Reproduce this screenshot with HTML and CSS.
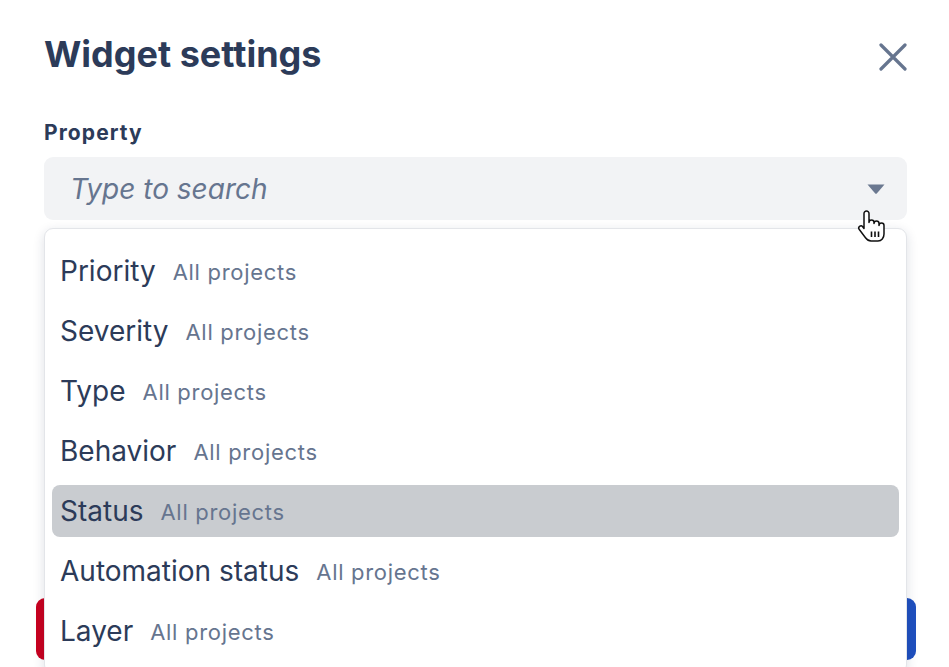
FILE: index.html
```html
<!DOCTYPE html>
<html lang="en">
<head>
<meta charset="utf-8">
<title>Widget settings</title>
<link rel="stylesheet" href="styles.css">
</head>
<body>
<div class="dialog">
  <header class="dialog-header">
    <h2 class="dialog-title">Widget settings</h2>
    <button class="close-btn" aria-label="Close">
      <svg width="28" height="28" viewBox="0 0 28 28"><path d="M2 2 L26 26 M26 2 L2 26" stroke="#66758f" stroke-width="3.2" stroke-linecap="round" fill="none"/></svg>
    </button>
  </header>

  <div class="field">
    <label class="field-label">Property</label>
    <div class="select">
      <span class="placeholder">Type to search</span>
      <svg class="caret" width="18" height="10" viewBox="0 0 18 10"><path d="M0.5 0.5 H17.5 L10 9.2 Q9 10.2 8 9.2 Z" fill="#6b7890"/></svg>
      <svg class="cursor" width="30" height="32" viewBox="0 0 30 32"><path d="M9.5 1 a2.5 2.5 0 0 1 2.5 2.5 V12.5 a2.5 2.5 0 0 1 5 0 V13.5 a2.5 2.5 0 0 1 5 0 V15.5 a2.5 2.5 0 0 1 5 0 V24 c0 4-2.5 7-6 7 H14 c-2.5 0-4-1.2-5.5-3.2 L2.3 19.5 a2.2 2.2 0 0 1 3.4-2.8 L7 18.5 V3.5 a2.5 2.5 0 0 1 2.5-2.5 z" fill="#fff" stroke="#111" stroke-width="1.5" stroke-linejoin="round"/><path d="M14.5 21.5v5.5 M18 21.5v5.5 M21.5 21.5v5.5" stroke="#111" stroke-width="1.6"/></svg>
    </div>
    <ul class="menu">
      <li class="option"><span class="opt-name">Priority</span><span class="opt-scope">All projects</span></li>
      <li class="option"><span class="opt-name">Severity</span><span class="opt-scope">All projects</span></li>
      <li class="option"><span class="opt-name">Type</span><span class="opt-scope">All projects</span></li>
      <li class="option"><span class="opt-name">Behavior</span><span class="opt-scope">All projects</span></li>
      <li class="option active"><span class="opt-name">Status</span><span class="opt-scope">All projects</span></li>
      <li class="option"><span class="opt-name">Automation status</span><span class="opt-scope">All projects</span></li>
      <li class="option"><span class="opt-name">Layer</span><span class="opt-scope">All projects</span></li>
    </ul>
  </div>

  <footer class="dialog-footer">
    <button class="btn btn-danger" aria-label="Delete"></button>
    <button class="btn btn-primary" aria-label="Save"></button>
  </footer>
</div>
</body>
</html>
```

FILE: styles.css
```css
html, body {
  margin: 0;
  padding: 0;
  height: 667px;
  overflow: hidden;
  background: #ffffff;
}
body {
  font-family: "Inter", "Noto Sans", sans-serif;
  color: #2c3b59;
}
.dialog {
  padding: 32px 42px 0 44px;
}
.dialog-header {
  display: flex;
  justify-content: space-between;
  align-items: center;
  height: 44px;
}
.dialog-title {
  margin: 0;
  font-size: 36px;
  line-height: 44px;
  font-weight: 700;
  color: #2c3b59;
}
.close-btn {
  border: 0;
  background: none;
  padding: 0;
  width: 28px;
  height: 28px;
  margin-top: 6px;
  display: flex;
}
.field {
  position: relative;
  margin-top: 44px;
}
.field-label {
  display: block;
  font-size: 21px;
  line-height: 25px;
  font-weight: 700;
  letter-spacing: 1.1px;
  color: #2c3b59;
}
.select {
  position: relative;
  margin-top: 12px;
  height: 63px;
  background: #f2f3f5;
  border-radius: 9px;
  display: flex;
  align-items: center;
  padding: 0 22px 0 26px;
}
.placeholder {
  flex: 1;
  font-size: 28px;
  font-style: italic;
  color: #66758f;
}
.caret {
  display: block;
}
.cursor {
  position: absolute;
  right: 20px;
  top: 53px;
  z-index: 5;
}
.menu {
  position: absolute;
  left: 0;
  right: 0;
  top: calc(100% + 8px);
  margin: 0;
  padding: 16px 7px 16px 7px;
  list-style: none;
  background: #ffffff;
  border: 1px solid #e3e5e9;
  border-radius: 9px;
  box-shadow: 0 3px 12px rgba(20, 35, 70, 0.14);
  display: flex;
  flex-direction: column;
  gap: 8px;
  z-index: 3;
}
.option {
  height: 52px;
  display: flex;
  align-items: center;
  gap: 17px;
  padding: 0 8px;
  border-radius: 8px;
}
.option.active {
  background: #c9ccd0;
}
.opt-name {
  font-size: 28px;
  color: #2c3b59;
}
.opt-scope {
  font-size: 22px;
  letter-spacing: 0.7px;
  color: #66758f;
  padding-top: 1px;
}
.dialog-footer {
  display: flex;
  justify-content: space-between;
  margin: 378px -9px 0 -8px;
}
.btn {
  width: 160px;
  height: 62px;
  border: 0;
  border-radius: 9px;
  padding: 0;
}
.btn-danger {
  background: #c8001f;
}
.btn-primary {
  background: #1f50bf;
}
```
